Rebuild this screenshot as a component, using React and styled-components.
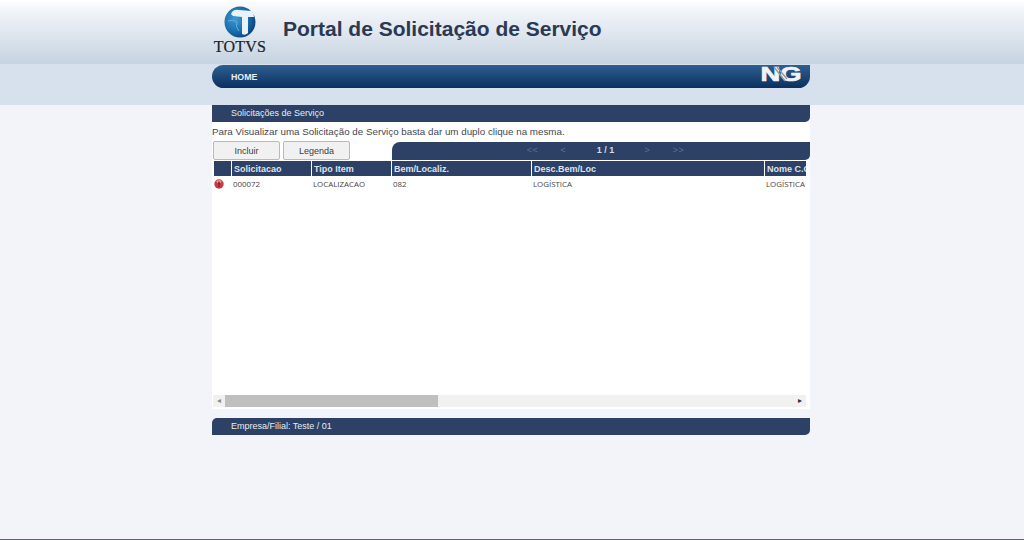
import styled, { createGlobalStyle } from "styled-components";

const GlobalStyle = createGlobalStyle`
    html, body {
        margin: 0;
        padding: 0;
        background: #f2f4fa;
    }
    * {
        box-sizing: border-box;
    }
    body {
        font-family: "Liberation Sans", Arial, sans-serif;
    }
`;

const columns = [
    { title: "", width: 17 },
    { title: "Solicitacao", width: 79 },
    { title: "Tipo Item", width: 79 },
    { title: "Bem/Localiz.", width: 139 },
    { title: "Desc.Bem/Loc", width: 232 },
    { title: "Nome C.C.", width: 60 },
];

const row = ["000072", "LOCALIZACAO", "082", "LOGÍSTICA", "LOGÍSTICA"];

function TotvsLogo() {
    return (
        <LogoBox>
            <svg width="32" height="32" viewBox="0 0 32 32">
                <defs>
                    <radialGradient id="globe" cx="35%" cy="40%" r="70%">
                        <stop offset="0" stopColor="#3f9ad2" />
                        <stop offset="0.65" stopColor="#1568a8" />
                        <stop offset="1" stopColor="#0b3f78" />
                    </radialGradient>
                </defs>
                <circle cx="16" cy="16" r="15.5" fill="url(#globe)" />
                <path d="M7 8 Q9 3 15 4 L28 5 Q30 8 30 11 L24 11 L24 27 Q21 30 18 28 L18 11 L9 10 Z" fill="#e9f2f8" />
                <path d="M4 15 Q9 13 13 16 Q11 21 15 25" fill="none" stroke="#5eb0de" strokeWidth="1" />
            </svg>
            <LogoText>TOTVS</LogoText>
        </LogoBox>
    );
}

function NgLogo() {
    return (
        <NgMark width="42" height="20" viewBox="0 0 42 20">
            <text
                x="0.5"
                y="17"
                textLength="41"
                lengthAdjust="spacingAndGlyphs"
                fontFamily="'Liberation Sans', sans-serif"
                fontWeight="700"
                fontSize="20"
                fill="#f1f4f7"
                stroke="#f1f4f7"
                strokeWidth="0.7"
            >
                NG
            </text>
            <path d="M14 3 L25 17 M17 3 L27 15" stroke="#8d9bae" strokeWidth="1.4" />
        </NgMark>
    );
}

function AlertIcon() {
    return (
        <svg width="10" height="10" viewBox="0 0 10 10">
            <circle cx="5" cy="5" r="4.7" fill="#c93a3f" />
            <ellipse cx="5" cy="2.6" rx="2.6" ry="1.5" fill="#ee9a9a" />
            <rect x="4.3" y="2.5" width="1.4" height="3.4" fill="#7c1c22" />
            <rect x="4.3" y="6.6" width="1.4" height="1.3" fill="#7c1c22" />
        </svg>
    );
}

export default function App() {
    return (
        <>
            <GlobalStyle />
            <Top>
                <Wrapper>
                    <Brand>
                        <TotvsLogo />
                        <Title>Portal de Solicitação de Serviço</Title>
                    </Brand>
                    <Nav>
                        <NavLink>HOME</NavLink>
                        <NgLogo />
                    </Nav>
                </Wrapper>
            </Top>
            <Wrapper>
                <Panel>
                    <SectionBar>Solicitações de Serviço</SectionBar>
                    <Hint>Para Visualizar uma Solicitação de Serviço basta dar um duplo clique na mesma.</Hint>
                    <Toolbar>
                        <Buttons>
                            <Button>Incluir</Button>
                            <Button>Legenda</Button>
                        </Buttons>
                        <Pager>
                            <PagerLink>&lt;&lt;</PagerLink>
                            <PagerLink>&lt;</PagerLink>
                            <PagerCount>1 / 1</PagerCount>
                            <PagerLink>&gt;</PagerLink>
                            <PagerLink>&gt;&gt;</PagerLink>
                        </Pager>
                    </Toolbar>
                    <TableArea>
                        <Table>
                            <colgroup>
                                {columns.map((c, i) => (
                                    <col key={i} width={c.width} />
                                ))}
                            </colgroup>
                            <thead>
                                <tr>
                                    {columns.map((c, i) => (
                                        <Th key={i}>{c.title}</Th>
                                    ))}
                                </tr>
                            </thead>
                            <tbody>
                                <tr>
                                    <IconCell>
                                        <AlertIcon />
                                    </IconCell>
                                    {row.map((value, i) => (
                                        <Td key={i}>{value}</Td>
                                    ))}
                                </tr>
                            </tbody>
                        </Table>
                    </TableArea>
                    <Scrollbar>
                        <Arrow $dark={false}>◂</Arrow>
                        <Track>
                            <Thumb />
                        </Track>
                        <Arrow $dark>▸</Arrow>
                    </Scrollbar>
                </Panel>
                <FooterBar>Empresa/Filial: Teste / 01</FooterBar>
            </Wrapper>
            <BottomLine />
        </>
    );
}

const Top = styled.div`
    height: 105px;
    background: linear-gradient(180deg, #ffffff 0px, #f2f5f9 10px, #c6d3e1 64px, #d6e1ed 64px, #d6e1ed 105px);
`;

const Wrapper = styled.div`
    width: 598px;
    margin-left: 212px;
`;

const Brand = styled.div`
    display: flex;
    height: 65px;
`;

const LogoBox = styled.div`
    width: 54px;
    margin-left: 1px;
    padding-top: 6px;
    display: flex;
    flex-direction: column;
    align-items: center;
`;

const LogoText = styled.div`
    font-family: "Liberation Serif", serif;
    font-size: 16px;
    line-height: 15px;
    color: #20242c;
    margin-top: 1px;
    letter-spacing: 0.2px;
    -webkit-text-stroke: 0.2px #20242c;
`;

const Title = styled.h1`
    margin: 17px 0 0 16px;
    font-size: 21px;
    line-height: 24px;
    font-weight: 700;
    color: #2b3953;
`;

const Nav = styled.div`
    height: 23px;
    display: flex;
    align-items: center;
    justify-content: space-between;
    padding: 0 8px 0 19px;
    background: linear-gradient(180deg, #2f5f8f 0%, #1d4a7b 45%, #0b2f5e 100%);
    border-radius: 12px 0 12px 12px;
`;

const NgMark = styled.svg`
    margin-top: -5px;
`;

const NavLink = styled.span`
    font-size: 8.8px;
    font-weight: 700;
    color: #e6edf4;
`;

const Panel = styled.div`
    background: #ffffff;
    height: 304px;
`;

const SectionBar = styled.div`
    height: 17px;
    padding-left: 19px;
    background: #2c4165;
    border-radius: 0 0 5px 0;
    font-size: 9px;
    line-height: 16px;
    color: #e8ecf2;
`;

const Hint = styled.div`
    height: 19px;
    padding-top: 3px;
    font-size: 9.8px;
    line-height: 13px;
    color: #3f4754;
`;

const Toolbar = styled.div`
    display: flex;
    justify-content: space-between;
    height: 20px;
`;

const Buttons = styled.div`
    display: flex;
    gap: 3px;
    padding-left: 1px;
`;

const Button = styled.button`
    width: 67px;
    height: 19px;
    padding: 0;
    background: #f1f1f1;
    border: 1px solid #b9b9b9;
    border-radius: 2px;
    font-family: inherit;
    font-size: 9px;
    color: #3c3c3c;
`;

const Pager = styled.div`
    width: 418px;
    height: 18px;
    margin-top: 1px;
    display: flex;
    align-items: center;
    padding: 0 0 2px 125px;
    background: #2c4165;
    border-radius: 8px 0 5px 0;
`;

const PagerLink = styled.span`
    width: 31px;
    font-size: 9px;
    text-align: center;
    color: #5f708a;
    letter-spacing: 0.5px;
`;

const PagerCount = styled.span`
    width: 53px;
    font-size: 9px;
    font-weight: 700;
    text-align: center;
    color: #d5dce6;
`;

const TableArea = styled.div`
    height: 234px;
    width: 593px;
    margin-left: 1px;
    overflow: hidden;
`;

const Table = styled.table`
    width: 613px;
    table-layout: fixed;
    border-collapse: separate;
    border-spacing: 1px 0;
`;

const Th = styled.th`
    height: 15px;
    padding: 0 0 0 2px;
    background: #2c4165;
    font-size: 9px;
    font-weight: 700;
    text-align: left;
    white-space: nowrap;
    overflow: hidden;
    color: #dde3eb;
`;

const Td = styled.td`
    height: 16px;
    padding: 0 0 0 1px;
    font-family: "Open Sans", "Liberation Sans", sans-serif;
    font-size: 7.9px;
    white-space: nowrap;
    overflow: hidden;
    color: #444444;
`;

const IconCell = styled.td`
    padding: 0;
    line-height: 0;
`;

const Scrollbar = styled.div`
    display: flex;
    align-items: stretch;
    width: 593px;
    height: 12px;
    margin-left: 1px;
    background: #f1f1f1;
`;

const Arrow = styled.span`
    width: 12px;
    font-size: 8px;
    line-height: 12px;
    text-align: center;
    color: ${props => (props.$dark ? "#333333" : "#8a8a8a")};
`;

const Track = styled.div`
    flex: 1;
`;

const Thumb = styled.div`
    width: 213px;
    height: 100%;
    background: #bfbfbf;
`;

const FooterBar = styled.div`
    height: 17px;
    margin-top: 9px;
    padding-left: 19px;
    background: #2c4165;
    border-radius: 5px 0 5px 0;
    font-size: 9px;
    line-height: 16px;
    color: #e8ecf2;
`;

const BottomLine = styled.div`
    position: absolute;
    left: 0;
    top: 539px;
    width: 100%;
    height: 1px;
    background: #5d6470;
`;
